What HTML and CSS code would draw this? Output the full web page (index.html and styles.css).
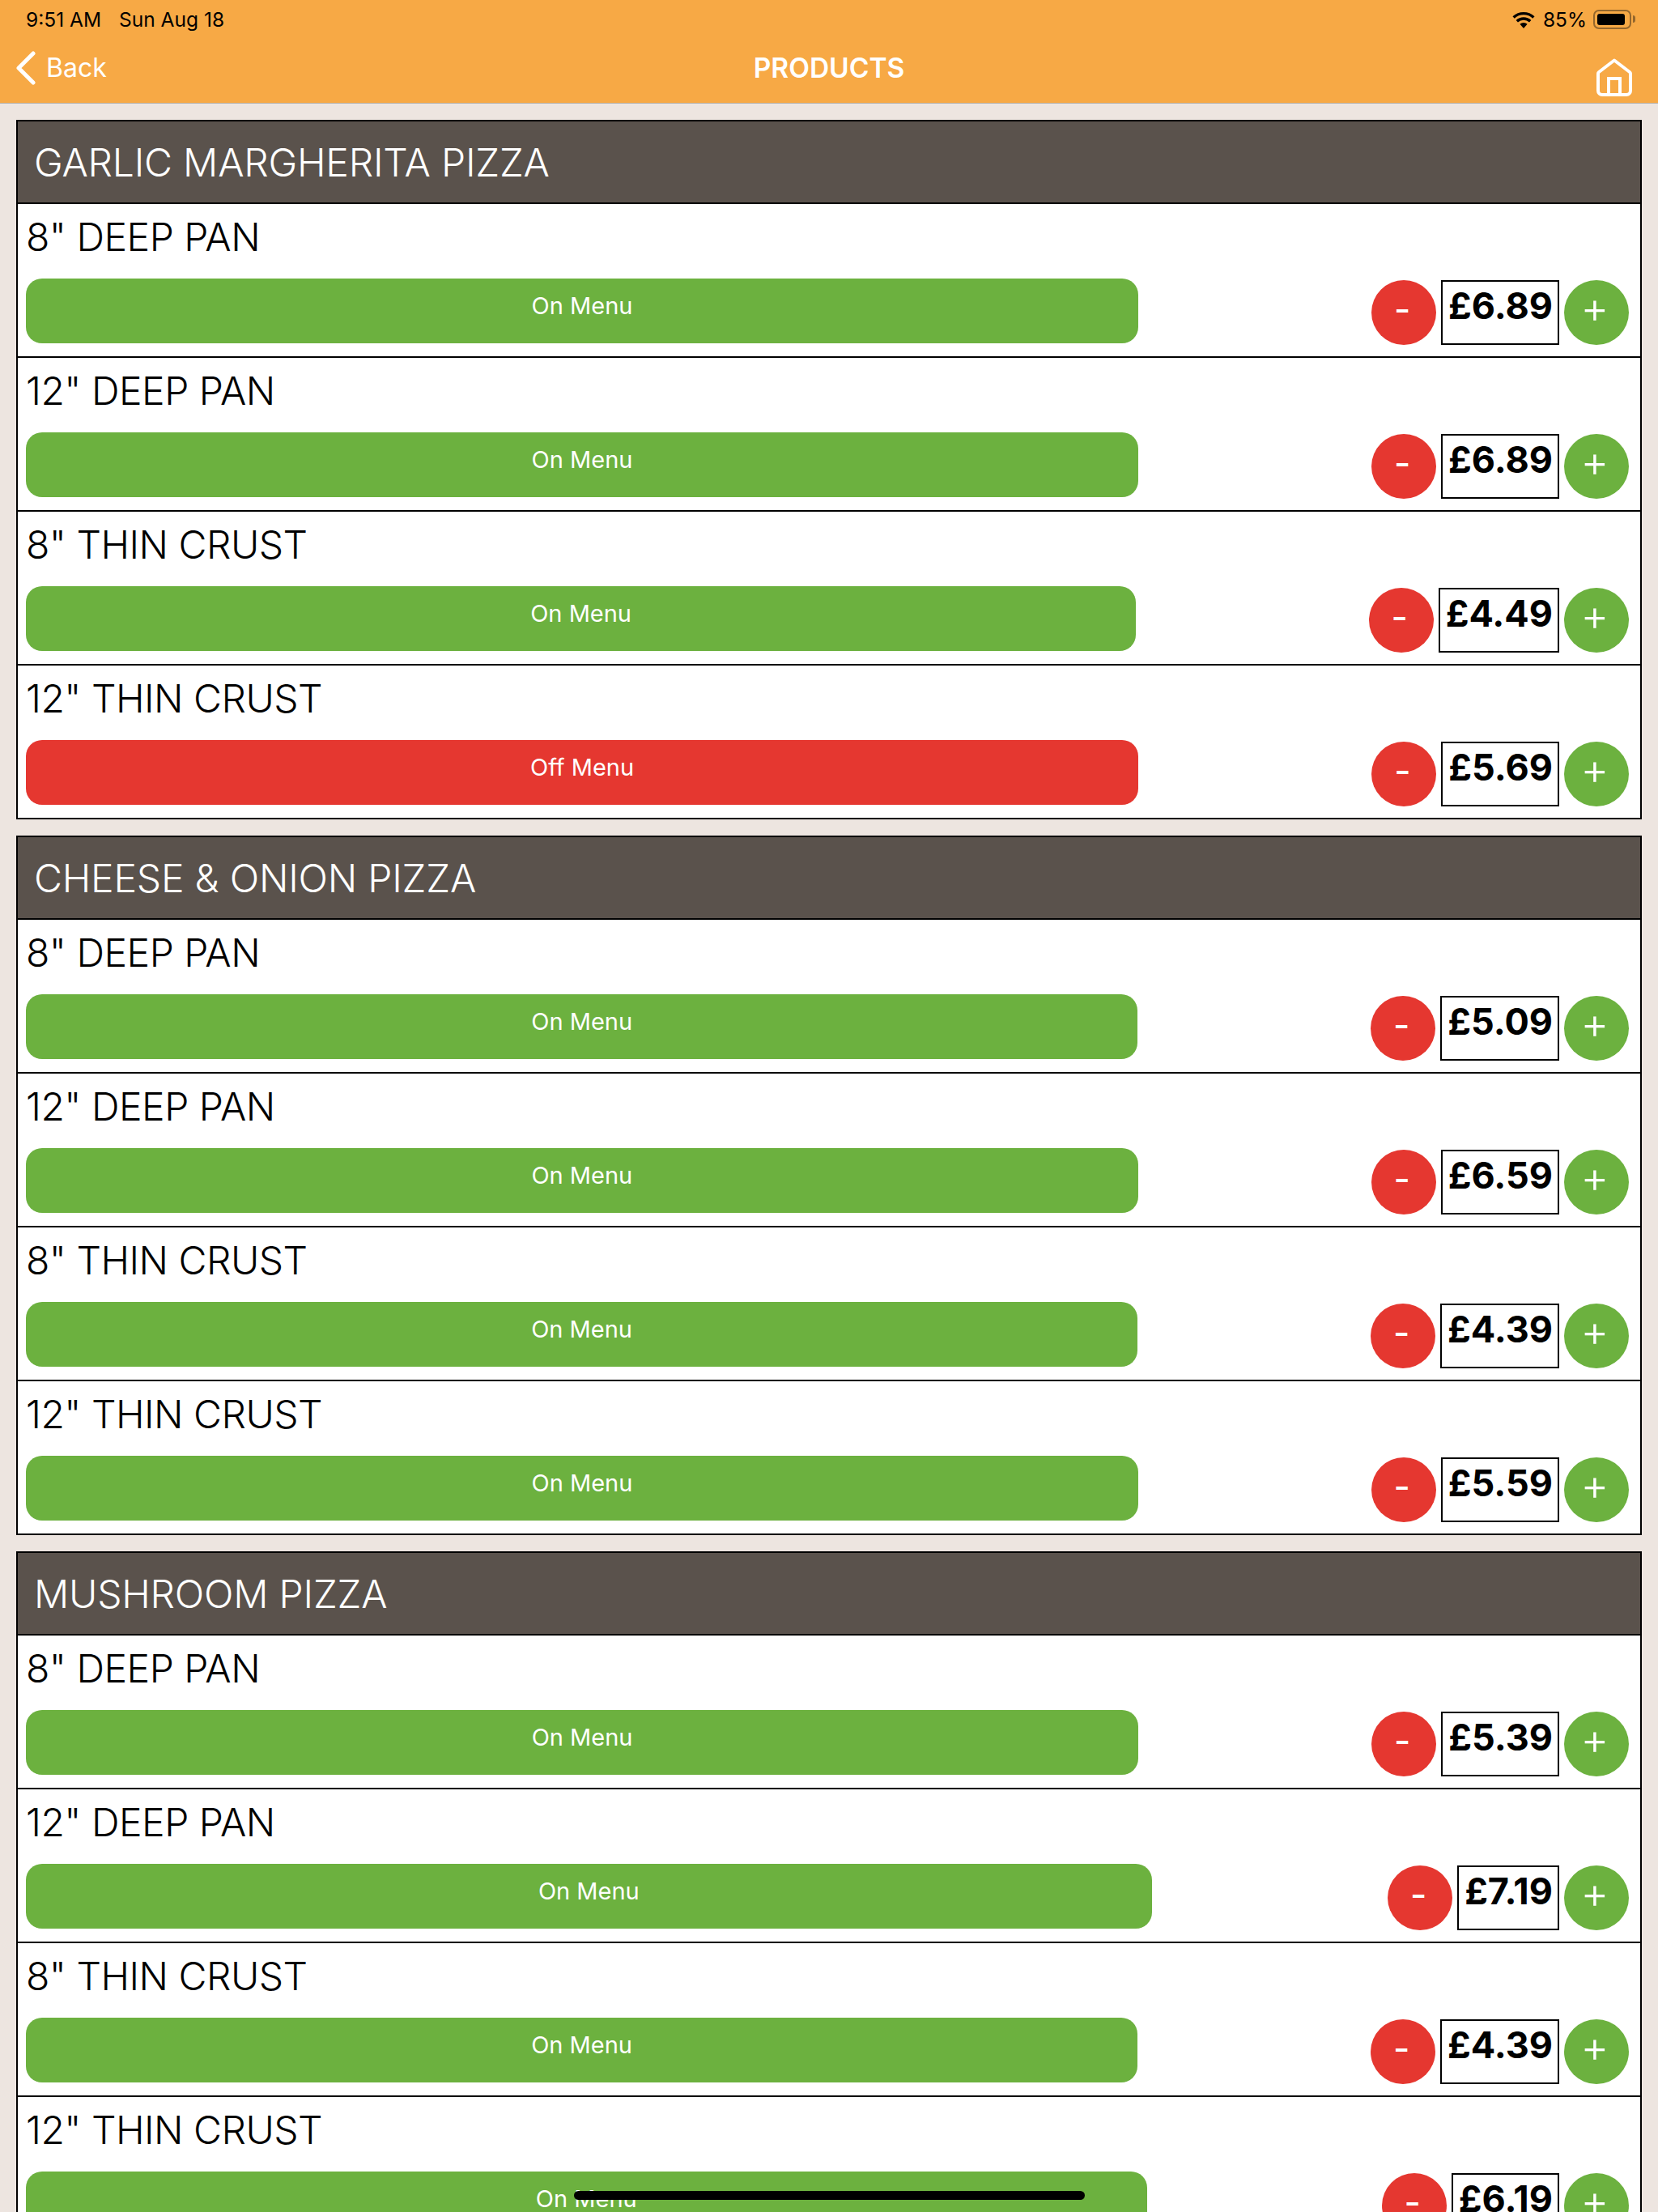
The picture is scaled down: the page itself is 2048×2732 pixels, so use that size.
FILE: index.html
```html
<!DOCTYPE html>
<html lang="en">
<head>
  <meta charset="UTF-8">
  <title>Products</title>
  <meta name="viewport" content="width=device-width, initial-scale=1.0">
  <link rel="stylesheet" href="styles.css">
</head>
<body>
  <header class="topbar">
    <div class="status-bar">
      <div class="status-time"><span>9:51 AM</span><span>Sun Aug 18</span></div>
      <div class="status-right">
        <svg class="wifi" viewBox="0 0 28 21" aria-hidden="true">
          <path d="M14 21l-4.600-5.200a7 7 0 0 1 9.200 0z" fill="#000"/>
          <path d="M5.800 12.200a12 12 0 0 1 16.400 0" fill="none" stroke="#000" stroke-width="3.400"/>
          <path d="M1.600 7.400a18.400 18.400 0 0 1 24.800 0" fill="none" stroke="#000" stroke-width="3.400"/>
        </svg>
        <span>85%</span>
        <div class="battery"><div class="battery-level"></div></div>
      </div>
    </div>
    <nav class="nav-bar">
      <a class="back" href="#">
        <svg class="chevron" viewBox="0 0 26 42" aria-hidden="true">
          <path d="M22 3L4 21l18 18" fill="none" stroke="#fff" stroke-width="5" stroke-linecap="round" stroke-linejoin="round"/>
        </svg>
        Back
      </a>
      <div class="nav-title">PRODUCTS</div>
      <svg class="home" viewBox="0 0 44 47" aria-hidden="true">
        <path d="M22 2.500L41 17a2.500 2.500 0 0 1 1 2V40a5 5 0 0 1-5 5H7a5 5 0 0 1-5-5V19a2.500 2.500 0 0 1 1-2z" fill="none" stroke="#fff" stroke-width="4" stroke-linejoin="round"/>
        <path d="M15 45V25h14V45" fill="none" stroke="#fff" stroke-width="4"/>
      </svg>
    </nav>
  </header>

  <main class="content">
    <section class="panel">
      <h2 class="panel-title">GARLIC MARGHERITA PIZZA</h2>
      <div class="row">
        <div class="row-name">8" DEEP PAN</div>
        <div class="row-controls">
          <div class="status-wrap"><button class="status on">On Menu</button></div>
          <button class="round minus">-</button><div class="price">£6.89</div><button class="round plus">+</button>
        </div>
      </div>
      <div class="row">
        <div class="row-name">12" DEEP PAN</div>
        <div class="row-controls">
          <div class="status-wrap"><button class="status on">On Menu</button></div>
          <button class="round minus">-</button><div class="price">£6.89</div><button class="round plus">+</button>
        </div>
      </div>
      <div class="row">
        <div class="row-name">8" THIN CRUST</div>
        <div class="row-controls">
          <div class="status-wrap"><button class="status on">On Menu</button></div>
          <button class="round minus">-</button><div class="price">£4.49</div><button class="round plus">+</button>
        </div>
      </div>
      <div class="row">
        <div class="row-name">12" THIN CRUST</div>
        <div class="row-controls">
          <div class="status-wrap"><button class="status off">Off Menu</button></div>
          <button class="round minus">-</button><div class="price">£5.69</div><button class="round plus">+</button>
        </div>
      </div>
    </section>

    <section class="panel">
      <h2 class="panel-title">CHEESE &amp; ONION PIZZA</h2>
      <div class="row">
        <div class="row-name">8" DEEP PAN</div>
        <div class="row-controls">
          <div class="status-wrap"><button class="status on">On Menu</button></div>
          <button class="round minus">-</button><div class="price">£5.09</div><button class="round plus">+</button>
        </div>
      </div>
      <div class="row">
        <div class="row-name">12" DEEP PAN</div>
        <div class="row-controls">
          <div class="status-wrap"><button class="status on">On Menu</button></div>
          <button class="round minus">-</button><div class="price">£6.59</div><button class="round plus">+</button>
        </div>
      </div>
      <div class="row">
        <div class="row-name">8" THIN CRUST</div>
        <div class="row-controls">
          <div class="status-wrap"><button class="status on">On Menu</button></div>
          <button class="round minus">-</button><div class="price">£4.39</div><button class="round plus">+</button>
        </div>
      </div>
      <div class="row">
        <div class="row-name">12" THIN CRUST</div>
        <div class="row-controls">
          <div class="status-wrap"><button class="status on">On Menu</button></div>
          <button class="round minus">-</button><div class="price">£5.59</div><button class="round plus">+</button>
        </div>
      </div>
    </section>

    <section class="panel">
      <h2 class="panel-title">MUSHROOM PIZZA</h2>
      <div class="row">
        <div class="row-name">8" DEEP PAN</div>
        <div class="row-controls">
          <div class="status-wrap"><button class="status on">On Menu</button></div>
          <button class="round minus">-</button><div class="price">£5.39</div><button class="round plus">+</button>
        </div>
      </div>
      <div class="row">
        <div class="row-name">12" DEEP PAN</div>
        <div class="row-controls">
          <div class="status-wrap"><button class="status on">On Menu</button></div>
          <button class="round minus">-</button><div class="price">£7.19</div><button class="round plus">+</button>
        </div>
      </div>
      <div class="row">
        <div class="row-name">8" THIN CRUST</div>
        <div class="row-controls">
          <div class="status-wrap"><button class="status on">On Menu</button></div>
          <button class="round minus">-</button><div class="price">£4.39</div><button class="round plus">+</button>
        </div>
      </div>
      <div class="row">
        <div class="row-name">12" THIN CRUST</div>
        <div class="row-controls">
          <div class="status-wrap"><button class="status on">On Menu</button></div>
          <button class="round minus">-</button><div class="price">£6.19</div><button class="round plus">+</button>
        </div>
      </div>
    </section>
  </main>

  <div class="home-indicator"></div>
</body>
</html>
```
FILE: styles.css
```css
* { box-sizing: border-box; }
html, body { height: 100%; }
body {
  margin: 0;
  overflow: hidden;
  background: #ede5e0;
  color: #000;
  font-family: Inter, 'Liberation Sans', sans-serif;
}

/* Top bar */
.topbar {
  height: 128px;
  background: #f7a945;
  border-bottom: 1px solid #b5b0a8;
}
.status-bar {
  height: 48px;
  display: flex;
  align-items: center;
  justify-content: space-between;
  padding: 0 33px 0 32px;
  font-size: 24.500px;
}
.status-time { display: flex; gap: 22px; }
.status-right { display: flex; align-items: center; }
.wifi { width: 28px; height: 21px; margin-right: 10px; }
.battery {
  position: relative;
  width: 47px;
  height: 24px;
  margin-left: 8px;
  padding: 3px;
  border: 2px solid #94672d;
  border-radius: 7px;
}
.battery::after {
  content: "";
  position: absolute;
  right: -7px;
  top: 5px;
  width: 3px;
  height: 9px;
  background: #94672d;
  border-radius: 0 3px 3px 0;
}
.battery-level {
  width: 34px;
  height: 14px;
  background: #000;
  border-radius: 3px;
}
.nav-bar {
  height: 79px;
  display: grid;
  grid-template-columns: 1fr auto 1fr;
  align-items: center;
  padding: 0 32px 8px;
  color: #fff;
}
.back {
  margin-left: -13px;
  display: flex;
  align-items: center;
  gap: 12px;
  color: #fff;
  font-size: 32px;
  text-decoration: none;
}
.chevron { width: 26px; height: 42px; }
.nav-title { font-size: 33.500px; font-weight: 600; }
.home {
  width: 44px;
  height: 47px;
  margin: 24px 0 -10px;
  align-self: start;
  justify-self: end;
}

/* Panels */
.content { padding: 20px 20px 0; }
.panel {
  margin-bottom: 20px;
  background: #fff;
  border: 2px solid #000;
  border-bottom: none;
}
.panel-title {
  height: 102px;
  margin: 0;
  padding: 0 20px;
  display: flex;
  align-items: center;
  background: #5a524c;
  border-bottom: 2px solid #000;
  color: #fff;
  font-size: 48px;
  font-weight: 300;
  letter-spacing: -0.2px;
}
.row {
  height: 190px;
  padding: 0 14px 0 10px;
  border-bottom: 2px solid #000;
}
.row-name {
  height: 92px;
  padding-top: 12px;
  font-size: 48px;
  font-weight: 350;
  letter-spacing: -0.5px;
  line-height: 58px;
}

/* Controls */
.row-controls { display: flex; align-items: flex-start; }
.status-wrap { flex: 1; }
.status {
  display: block;
  width: 82.67%;
  height: 80px;
  padding: 0 0 13px;
  border: none;
  border-radius: 20px;
  color: #fff;
  font-family: inherit;
  font-size: 29px;
}
.status.on { background: #6cb13f; }
.status.off { background: #e53730; }
.round {
  width: 80px;
  height: 80px;
  margin-top: 2px;
  padding: 0 4px 8px 0;
  border: none;
  border-radius: 50%;
  color: #fff;
  font-family: inherit;
  font-size: 44px;
  font-weight: 500;
}
.minus { background: #e53730; }
.plus { padding-bottom: 13px; background: #6cb13f; font-size: 54px; font-weight: 300; }
.price {
  height: 80px;
  margin: 2px 6px 0;
  padding: 3px 6px 0 7px;
  border: 2px solid #000;
  font-size: 45px;
  font-weight: 700;
  line-height: 54px;
}

.home-indicator {
  position: fixed;
  left: 709px;
  top: 2706px;
  width: 631px;
  height: 11px;
  background: #000;
  border-radius: 6px;
}
```
